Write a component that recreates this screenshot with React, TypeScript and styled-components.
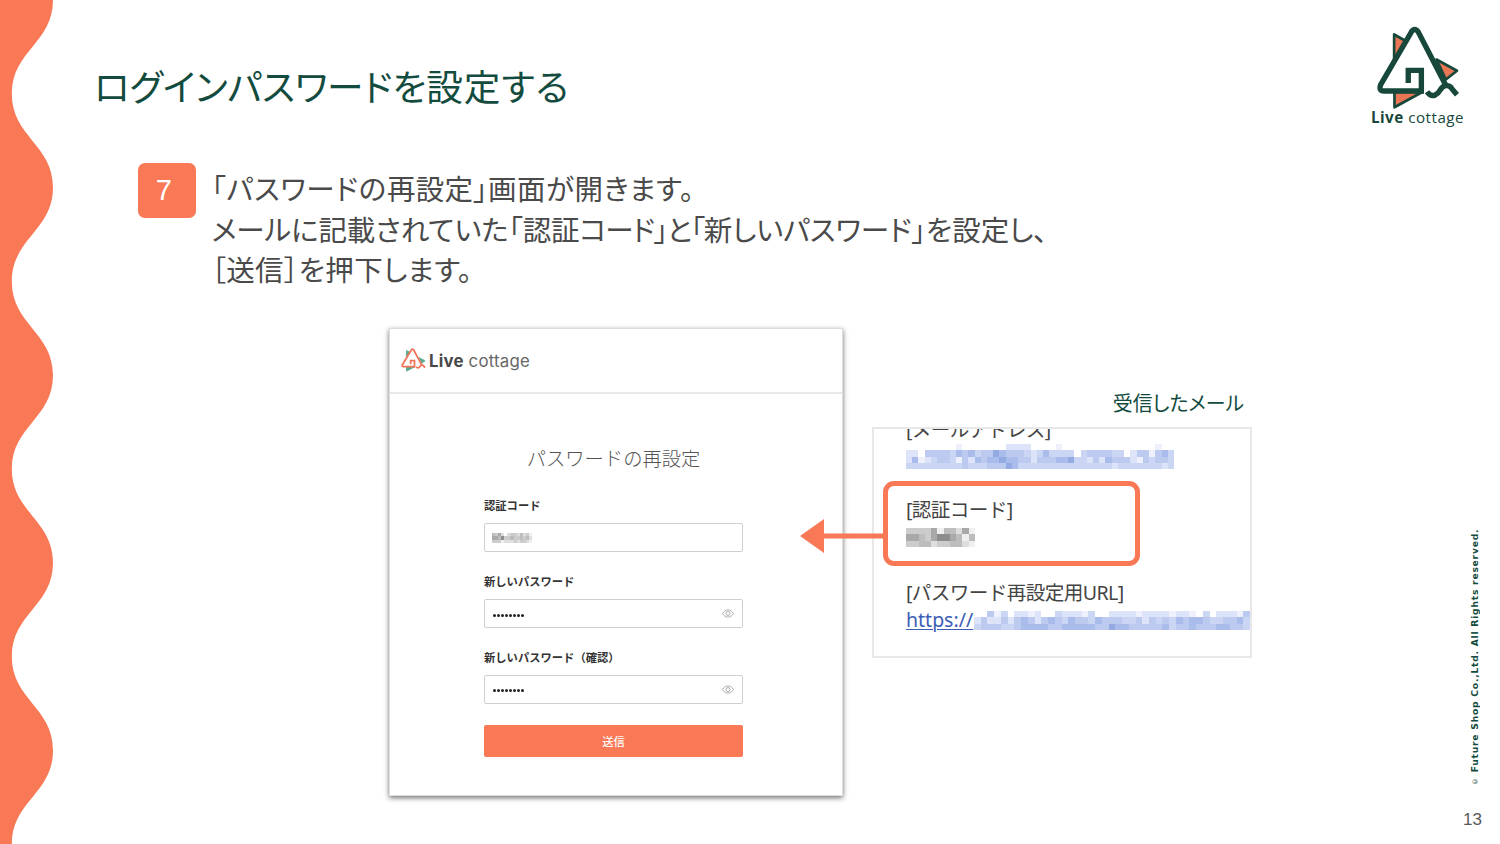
import styled, { createGlobalStyle } from "styled-components";

const GlobalStyle = createGlobalStyle`
  *,
  *::before,
  *::after {
    box-sizing: border-box;
  }

  body {
    margin: 0;
    background: #fff;
    font-family: "Liberation Sans", "Noto Sans CJK JP", sans-serif;
  }
`;

const Slide = styled.div`
  display: flex;
  width: 1500px;
  height: 844px;
  overflow: hidden;
  background: #fff;
`;

const WaveSvg = styled.svg`
  flex: none;
  width: 54px;
  height: 844px;
`;

const Main = styled.main`
  display: flex;
  flex-direction: column;
  width: 1306px;
  padding-top: 58px;
`;

const Title = styled.h1`
  margin: 0;
  padding-left: 40px;
  height: 54px;
  line-height: 54px;
  font-family: "Noto Sans CJK JP", sans-serif;
  font-size: 36.7px;
  font-weight: 400;
  font-feature-settings: "palt";
  white-space: nowrap;
  color: #134b3e;
`;

const Run = styled.span<{ $track?: number }>`
  letter-spacing: ${({ $track = 0 }) => $track}px;
`;

const Step = styled.section`
  display: flex;
  align-items: flex-start;
  gap: 16px;
  margin-top: 51px;
  padding-left: 84px;
`;

const StepNumber = styled.div`
  display: flex;
  align-items: center;
  justify-content: center;
  width: 57.5px;
  height: 55px;
  padding-right: 6px;
  border-radius: 7px;
  background: #f97856;
  color: #fff;
  font-size: 29px;
`;

const StepText = styled.div`
  display: flex;
  flex-direction: column;
  margin-top: 5px;
  font-family: "Noto Sans CJK JP", sans-serif;
  font-size: 28.5px;
  font-weight: 400;
  font-feature-settings: "palt";
  color: #4a4a4a;
`;

const StepLine = styled.p`
  margin: 0;
  height: 40.6px;
  line-height: 40.6px;
  white-space: nowrap;
`;

const Stage = styled.section`
  display: flex;
  align-items: flex-start;
  gap: 29px;
  margin-top: 38px;
  padding-left: 335px;
`;

const FormCard = styled.div`
  display: flex;
  flex-direction: column;
  width: 454px;
  height: 468px;
  border: 1px solid #dcdcdc;
  background: #fff;
  box-shadow: 0 2px 5px rgba(0, 0, 0, 0.55);
`;

const FormHeader = styled.header`
  display: flex;
  align-items: center;
  gap: 3px;
  height: 65px;
  padding-left: 11px;
  border-bottom: 2px solid #e9e9e9;
`;

const FormBrand = styled.span`
  padding-top: 2px;
  font-family: Inter, sans-serif;
  font-size: 16.8px;
  letter-spacing: 0.22px;
  color: #666;

  b {
    color: #484848;
    font-weight: 700;
  }
`;

const FormBody = styled.div`
  display: flex;
  flex-direction: column;
  width: 259px;
  margin-left: 94px;
  font-family: "Noto Sans CJK JP", sans-serif;
`;

const FormTitle = styled.h2`
  margin: 49px 0 3.7px;
  height: 30px;
  line-height: 30px;
  text-align: center;
  font-size: 19.3px;
  font-weight: 300;
  white-space: nowrap;
  color: #555;
`;

const Label = styled.label`
  height: 18px;
  margin-top: 19.8px;
  line-height: 18px;
  font-size: 11.3px;
  font-weight: 700;
  white-space: nowrap;
  color: #333;
`;

const Field = styled.div`
  display: flex;
  flex: none;
  align-items: center;
  justify-content: space-between;
  height: 29px;
  margin-top: 9px;
  padding: 0 8px 0 7px;
  border: 1px solid #cfcfcf;
  border-radius: 2px;
`;

const FieldGroup = styled.div`
  display: flex;
  flex: none;
  flex-direction: column;
  height: 75.8px;
`;

const Dots = styled.span`
  display: flex;
  gap: 1px;
  padding: 3px 0 0 1px;

  i {
    width: 3px;
    height: 3px;
    border-radius: 50%;
    background: #222;
  }
`;

const Submit = styled.button`
  height: 32px;
  margin-top: 21.3px;
  padding: 0;
  border: 0;
  border-radius: 2px;
  background: #f97856;
  color: #fff;
  font-family: "Noto Sans CJK JP", sans-serif;
  font-size: 11.3px;
  font-weight: 500;
`;

const MailColumn = styled.div`
  display: flex;
  flex-direction: column;
  width: 380px;
  margin-top: 60px;
`;

const MailCaption = styled.div`
  height: 30px;
  margin-bottom: 9px;
  padding-right: 8px;
  line-height: 30px;
  text-align: right;
  font-family: "Noto Sans CJK JP", sans-serif;
  font-size: 19.9px;
  font-feature-settings: "palt";
  color: #134b3e;
`;

const MailBox = styled.div`
  position: relative;
  height: 231px;
  border: 2px solid #e8e8e8;
`;

const MailContent = styled.div`
  display: flex;
  flex-direction: column;
  height: 227px;
  padding-left: 32px;
  overflow: hidden;
  font-family: "Noto Sans", "Noto Sans CJK JP", sans-serif;
  color: #444;
`;

const MailHeading = styled.div<{ $top: number }>`
  flex: none;
  height: 28px;
  margin-top: ${({ $top }) => $top}px;
  line-height: 28px;
  font-size: 19.6px;
  letter-spacing: -0.6px;
  white-space: nowrap;
`;

const MailRow = styled.div<{ $drop?: number }>`
  display: flex;
  flex: none;
  align-items: flex-start;
  height: 27px;

  svg {
    margin-top: ${({ $drop = 0 }) => $drop}px;
  }
`;

const MailLink = styled.span`
  width: 69px;
  line-height: 26px;
  font-size: 19.5px;
  text-decoration: underline;
  text-underline-offset: 2px;
  text-decoration-thickness: 1px;
  white-space: nowrap;
  color: #3c5db5;
`;

const MosaicSvg = styled.svg`
  display: block;
  flex: none;
`;

const Callout = styled.div`
  position: absolute;
  top: 52px;
  left: 9px;
  width: 257px;
  height: 85px;
  border: 5px solid #f97856;
  border-radius: 11px;
`;

const ArrowSvg = styled.svg`
  position: absolute;
  top: 90px;
  left: -74px;
  width: 86px;
  height: 34px;
`;

const Rail = styled.aside`
  display: flex;
  flex-direction: column;
  width: 140px;
  padding-top: 26px;
  color: #134b3e;
`;

const BrandBlock = styled.div`
  display: flex;
  flex-direction: column;
  align-items: center;
  width: 115px;
`;

const BrandName = styled.div`
  height: 18px;
  margin-top: -2px;
  line-height: 18px;
  font-family: "Open Sans", sans-serif;
  font-size: 15.2px;
  letter-spacing: 0.5px;
  white-space: nowrap;
  color: #17483b;
`;

const Copyright = styled.div`
  align-self: flex-end;
  height: 258px;
  margin: 401px 17px 0 0;
  writing-mode: vertical-rl;
  transform: rotate(180deg);
  font-family: "DejaVu Sans", sans-serif;
  font-size: 9.2px;
  font-weight: 700;
  line-height: 16px;
  letter-spacing: 0.76px;
  white-space: nowrap;

  span {
    margin-right: 3px;
    font-size: 7px;
    font-weight: 400;
  }
`;

const PageNumber = styled.div`
  align-self: flex-end;
  margin: 25px 18px 0 0;
  line-height: 20px;
  font-size: 17px;
  color: #595959;
`;

const Wave = () => {
  const half = 93.8;
  let d = "M0 0H53";
  for (let i = 0; i < 9; i++) {
    const y = i * half;
    const [from, to] = i % 2 ? [11.8, 53] : [53, 11.8];
    d += `C${from} ${y + 43} ${to} ${y + half - 43} ${to} ${y + half}`;
  }
  return (
    <WaveSvg viewBox="0 0 54 844">
      <path d={`${d}H0Z`} fill="#f97856" />
    </WaveSvg>
  );
};

interface MarkProps {
  width: number;
  height: number;
  line: string;
  fill: string;
  edge: string;
  stroke: number;
}

const CottageMark = ({ width, height, line, fill, edge, stroke }: MarkProps) => (
  <svg width={width} height={height} viewBox="78 36 250 248" preserveAspectRatio="none" fill="none">
    <g fill={fill} stroke={edge} strokeWidth={8} strokeLinejoin="round">
      <path d="M132 61L168 81L132 146Z" />
      <path d="M258 135L319 168L286 194Z" />
      <path d="M133 230V276L216 231Z" />
    </g>
    <path d="M193 48L91 212Q86 228 100 228H213V167H174V204L215 228L292 216L201 50Q196 43 190 51Z" fill="#fff" />
    <g stroke={line} strokeWidth={stroke} strokeLinejoin="round">
      <path d="M286 212L204 54Q193 39 183 54L92 209Q85 228 102 228H213V167H174V204" strokeLinejoin="miter" />
      <path d="M230 230Q240 245 254 240Q263 236 269 225Q279 209 291 212Q300 213 305 223L319 239" />
    </g>
  </svg>
);

const EyeIcon = () => (
  <svg width="12" height="9" viewBox="0 0 12 9" fill="none" stroke="#999" strokeWidth="0.8">
    <path d="M0.6 4.5C3 -0.3 9 -0.3 11.4 4.5C9 9.3 3 9.3 0.6 4.5Z" />
    <circle cx="6" cy="4.5" r="2" />
  </svg>
);

// Each digit picks a shade of the palette, 0 leaves the cell empty.
const blues = ["none", "#eef1fb", "#dde3f8", "#cbd5f4", "#bccaf0", "#a9bcec", "#93aae2"];
const greys = ["none", "#f0f0f0", "#dedede", "#cccccc", "#bdbdbd", "#a9a9a9", "#8d8d8d"];

const mailRows = [
  "0000000010000000222200001000000000000000100",
  "2204444354534465444323533330344443302441453",
  "2512344314254556554424445563324254442143443",
  "3333333334333444653333333333333332333333323",
];
const urlRows = [
  "00413022120032221300222212222122103022214",
  "24224245424543544354443342434354554334453",
  "34443345555445555544655444445344544455443",
];
const codeRows = ["33335144251", "55435665414", "33442334421"];
const inputRows = ["4352023324231", "5546334334342", "3331222323321"];

interface MosaicProps {
  rows: string[];
  colors: string[];
  width: number;
  height: number;
}

const Mosaic = ({ rows, colors, width, height }: MosaicProps) => (
  <MosaicSvg
    width={width}
    height={height}
    viewBox={`0 0 ${rows[0].length} ${rows.length}`}
    preserveAspectRatio="none"
    shapeRendering="crispEdges"
  >
    {rows.map((row, y) =>
      [...row].map((n, x) => (
        <rect key={`${x}-${y}`} x={x} y={y} width="1" height="1" fill={colors[Number(n)]} />
      ))
    )}
  </MosaicSvg>
);

const PasswordField = ({ label }: { label: string }) => (
  <FieldGroup>
    <Label>{label}</Label>
    <Field>
      <Dots>
        {[...Array(8)].map((_, i) => (
          <i key={i} />
        ))}
      </Dots>
      <EyeIcon />
    </Field>
  </FieldGroup>
);

const ResetForm = () => (
  <FormCard>
    <FormHeader>
      <CottageMark width={25} height={24} line="#f0765a" fill="#5aa893" edge="#5aa893" stroke={18} />
      <FormBrand>
        <b>Live</b> cottage
      </FormBrand>
    </FormHeader>
    <FormBody>
      <FormTitle>パスワードの再設定</FormTitle>
      <FieldGroup>
        <Label>認証コード</Label>
        <Field>
          <Mosaic rows={inputRows} colors={greys} width={40} height={10} />
        </Field>
      </FieldGroup>
      <PasswordField label="新しいパスワード" />
      <PasswordField label="新しいパスワード（確認）" />
      <Submit>送信</Submit>
    </FormBody>
  </FormCard>
);

const ReceivedMail = () => (
  <MailColumn>
    <MailCaption>受信したメール</MailCaption>
    <MailBox>
      <MailContent>
        <MailHeading $top={-13}>[メールアドレス]</MailHeading>
        <MailRow>
          <Mosaic rows={mailRows} colors={blues} width={268} height={25} />
        </MailRow>
        <MailHeading $top={25.5}>[認証コード]</MailHeading>
        <MailRow $drop={4}>
          <Mosaic rows={codeRows} colors={greys} width={69} height={19} />
        </MailRow>
        <MailHeading $top={28}>[パスワード再設定用URL]</MailHeading>
        <MailRow $drop={4}>
          <MailLink>https://</MailLink>
          <Mosaic rows={urlRows} colors={blues} width={276} height={19} />
        </MailRow>
      </MailContent>
      <Callout />
      <ArrowSvg viewBox="0 0 86 34">
        <path d="M0 17L24 0V14.5H86V19.5H24V34Z" fill="#f97856" />
      </ArrowSvg>
    </MailBox>
  </MailColumn>
);

const App = () => {
  return (
    <>
      <GlobalStyle />
      <Slide>
        <Wave />
        <Main>
          <Title>
            <Run $track={-0.1}>ログインパスワードを</Run>
            <Run $track={1}>設定する</Run>
          </Title>
          <Step>
            <StepNumber>7</StepNumber>
            <StepText>
              <StepLine>
                <Run $track={0.75}>「パスワードの</Run>
                <Run $track={0.3}>再設定」</Run>
                <Run $track={0.6}>画面が開きます。</Run>
              </StepLine>
              <StepLine>
                <Run $track={-0.05}>メールに記載されていた「認証</Run>
                <Run $track={-1.2}>コード」と「</Run>
                <Run>新しいパスワード」を設定し、</Run>
              </StepLine>
              <StepLine>
                <Run $track={0.4}>［送信］を押下します。</Run>
              </StepLine>
            </StepText>
          </Step>
          <Stage>
            <ResetForm />
            <ReceivedMail />
          </Stage>
        </Main>
        <Rail>
          <BrandBlock>
            <CottageMark width={84} height={84} line="#17483b" fill="#e97755" edge="#17483b" stroke={16} />
            <BrandName>
              <b>Live</b> cottage
            </BrandName>
          </BrandBlock>
          <Copyright>
            <span>©</span> Future Shop Co.,Ltd. All Rights reserved.
          </Copyright>
          <PageNumber>13</PageNumber>
        </Rail>
      </Slide>
    </>
  );
};

export default App;
